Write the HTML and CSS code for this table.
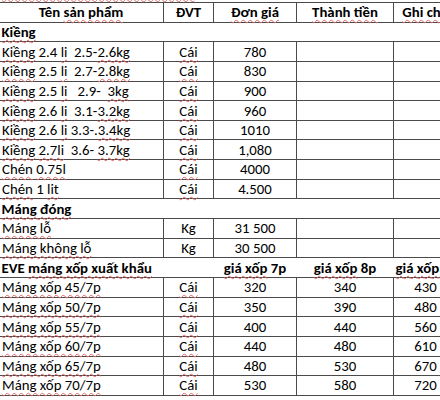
FILE: index.html
```html
<!DOCTYPE html>
<html lang="vi">
<head>
<meta charset="utf-8">
<link rel="stylesheet" href="styles.css">
</head>
<body>
<div class="sheet">
  <div class="title"><span class="sp">Bảng giá kiềng, chén, máng xốp</span></div>
  <table class="grid">
    <colgroup>
      <col class="c1"><col class="c2"><col class="c3"><col class="c4"><col class="c5">
    </colgroup>
    <tr class="head">
      <td>Tên <span class="sp">sản phẩm</span></td>
      <td>ĐVT</td>
      <td><span class="sp">Đơn giá</span></td>
      <td><span class="sp">Thành tiền</span></td>
      <td><span class="sp">Ghi chú</span></td>
    </tr>
    <tr class="sec"><td colspan="5"><span class="sp">Kiềng</span></td></tr>
    <tr><td class="name"><span class="sp">Kiềng</span> 2.4 <span class="sp">li</span>&nbsp; 2.5-<span class="sp">2.6kg</span></td><td><span class="sp">Cái</span></td><td>780</td><td></td><td></td></tr>
    <tr><td class="name"><span class="sp">Kiềng</span> 2.5 <span class="sp">li</span>&nbsp; 2.7-<span class="sp">2.8kg</span></td><td><span class="sp">Cái</span></td><td>830</td><td></td><td></td></tr>
    <tr><td class="name"><span class="sp">Kiềng</span> 2.5 <span class="sp">li</span>&nbsp;&nbsp; 2.9-&nbsp; <span class="sp">3kg</span></td><td><span class="sp">Cái</span></td><td>900</td><td></td><td></td></tr>
    <tr><td class="name"><span class="sp">Kiềng</span> 2.6 <span class="sp">li</span>&nbsp; 3.1-<span class="sp">3.2kg</span></td><td><span class="sp">Cái</span></td><td>960</td><td></td><td></td></tr>
    <tr><td class="name"><span class="sp">Kiềng</span> 2.6 <span class="sp">li</span> 3.3-.<span class="sp">3.4kg</span></td><td><span class="sp">Cái</span></td><td>1010</td><td></td><td></td></tr>
    <tr><td class="name"><span class="sp">Kiềng</span> <span class="sp">2.7li</span>&nbsp; 3.6- <span class="sp">3.7kg</span></td><td><span class="sp">Cái</span></td><td>1,080</td><td></td><td></td></tr>
    <tr><td class="name"><span class="sp">Chén</span> <span class="sp">0.75l</span></td><td><span class="sp">Cái</span></td><td>4000</td><td></td><td></td></tr>
    <tr><td class="name"><span class="sp">Chén</span> 1 <span class="sp">lit</span></td><td><span class="sp">Cái</span></td><td>4.500</td><td></td><td></td></tr>
    <tr class="sec"><td colspan="5"><span class="sp">Máng đóng</span></td></tr>
    <tr><td class="name"><span class="sp">Máng lỗ</span></td><td>Kg</td><td>31 500</td><td></td><td></td></tr>
    <tr><td class="name"><span class="sp">Máng không lỗ</span></td><td>Kg</td><td>30 500</td><td></td><td></td></tr>
    <tr class="sec eve"><td colspan="2">EVE <span class="sp">máng xốp xuất khẩu</span></td><td><span class="sp">giá xốp</span> 7p</td><td><span class="sp">giá xốp</span> 8p</td><td><span class="sp">giá xốp</span> 9p</td></tr>
    <tr><td class="name"><span class="sp">Máng xốp 45/7p</span></td><td><span class="sp">Cái</span></td><td>320</td><td>340</td><td>430</td></tr>
    <tr><td class="name"><span class="sp">Máng xốp 50/7p</span></td><td><span class="sp">Cái</span></td><td>350</td><td>390</td><td>480</td></tr>
    <tr><td class="name"><span class="sp">Máng xốp 55/7p</span></td><td><span class="sp">Cái</span></td><td>400</td><td>440</td><td>560</td></tr>
    <tr><td class="name"><span class="sp">Máng xốp 60/7p</span></td><td><span class="sp">Cái</span></td><td>440</td><td>480</td><td>610</td></tr>
    <tr><td class="name"><span class="sp">Máng xốp 65/7p</span></td><td><span class="sp">Cái</span></td><td>480</td><td>530</td><td>670</td></tr>
    <tr><td class="name"><span class="sp">Máng xốp 70/7p</span></td><td><span class="sp">Cái</span></td><td>530</td><td>580</td><td>720</td></tr>
  </table>
</div>
</body>
</html>
```

FILE: styles.css
```css
html, body {
  margin: 0;
  padding: 0;
  background: #ffffff;
  overflow: hidden;
}

body {
  width: 440px;
  height: 400px;
  font-family: Carlito, Lato, "Liberation Sans", sans-serif;
  font-size: 14.8px;
  color: #000;
}

.sheet {
  margin-top: -16px;
}

.title {
  height: 18px;
  line-height: 14px;
  padding-left: 2px;
  font-weight: bold;
  white-space: nowrap;
}

.grid {
  border-collapse: collapse;
  table-layout: fixed;
  width: 459px;
  margin-left: -2px;
}

.c1 { width: 165px; }
.c2 { width: 50px; }
.c3 { width: 83px; }
.c4 { width: 97px; }
.c5 { width: 64px; }

.grid td {
  border: 1px solid #4a4a4a;
  height: 18.65px;
  padding: 0 2px;
  text-align: center;
  vertical-align: middle;
  white-space: nowrap;
  line-height: 18px;
}

.grid td.name {
  text-align: left;
  padding-left: 3px;
}

.head td {
  font-weight: bold;
}

.sec td {
  font-weight: bold;
  text-align: left;
  padding-left: 3px;
  border-left: none;
  border-right: none;
}

.eve td {
  text-align: center;
  padding-left: 2px;
}

.eve td:first-child {
  text-align: left;
  padding-left: 3px;
}

.sp {
  text-decoration-line: underline;
  text-decoration-style: wavy;
  text-decoration-color: #e06666;
  text-decoration-thickness: 1px;
  text-underline-offset: 2px;
  text-decoration-skip-ink: none;
}
```
